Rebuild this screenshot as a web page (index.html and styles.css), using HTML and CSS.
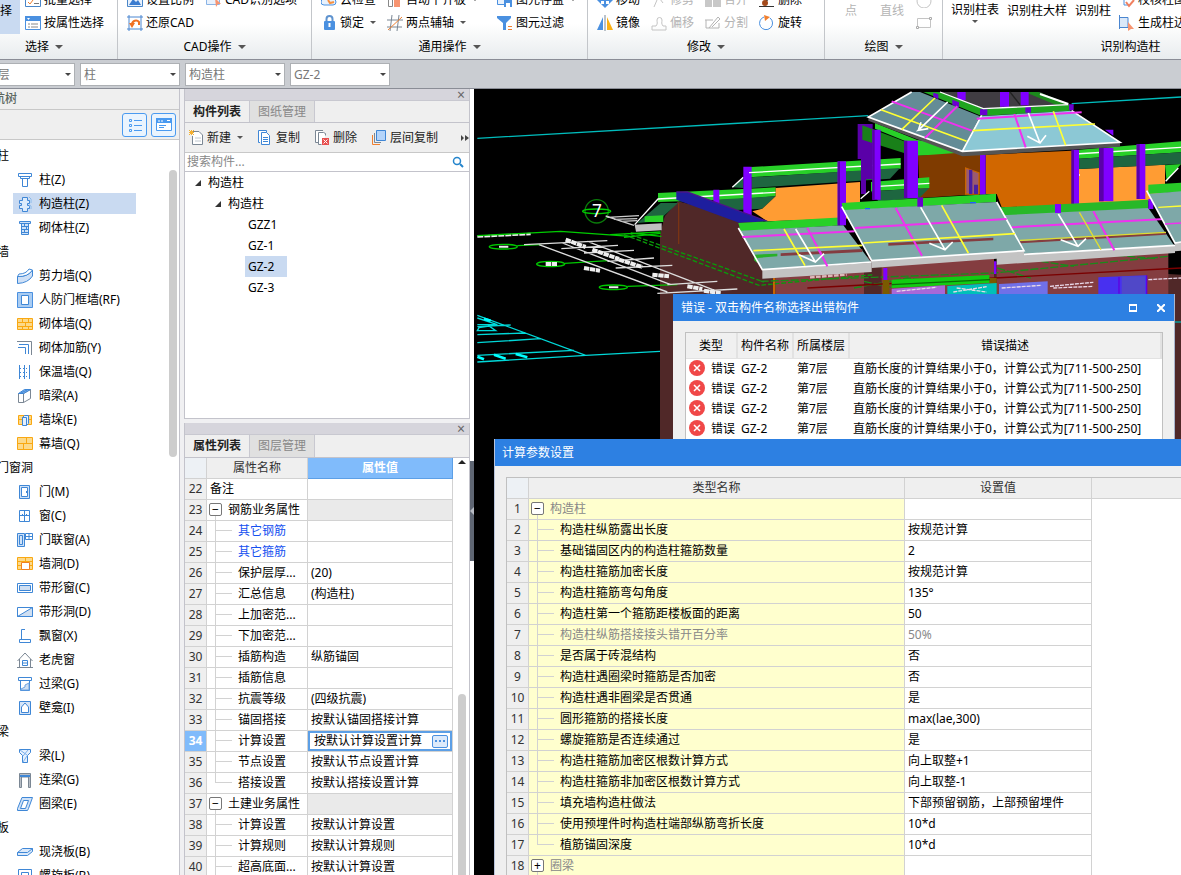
FILE: index.html
```
<!DOCTYPE html>
<html lang="zh-CN">
<head>
	<meta charset="UTF-8">
	<title>构造柱计算设置</title>
	<link rel="stylesheet" href="styles.css">
</head>
<body>
	<!-- 功能区 -->
	<header class="ribbon">
		<section class="group g-select">
			<div class="tools">
				<button class="big active">选择</button>
				<div class="cols">
					<button><svg class="ic" viewBox="0 0 16 16"><path d="M.5.5h15v14H.5z" fill="#fff" stroke="#4a86c8"/><path d="M3 10l2 2 3-4" fill="none" stroke="#f08030"/><path d="M9 11.5h5" stroke="#777"/></svg>批量选择</button>
					<button><svg class="ic" viewBox="0 0 16 16"><path d="M.5 1.500h15v13H.5z" fill="#fff" stroke="#4a90e0"/><path d="M0 1h16v5H0z" fill="#4a90e0"/><path d="M2 3h3l-1.500 2z" fill="#fff"/><path d="M3 9h2M3 12h2M6 9h7M6 12h7" stroke="#888"/></svg>按属性选择</button>
				</div>
			</div>
			<h2>选择<i class="arrow"></i></h2>
		</section>
		<section class="group g-cad">
			<div class="tools">
				<button><svg class="ic" viewBox="0 0 16 16"><path d="M.5.5h15v14H.5z" fill="#e8f1fc" stroke="#4a86c8"/><path d="M2 13l4-6 3 3 2-2 3 5z" fill="#3a7cd0"/></svg>设置比例</button>
				<button><svg class="ic" viewBox="0 0 16 16"><path d="M.5 4.500h13v8H.5z" fill="#e8f1fc" stroke="#8ab4e6"/><path d="M9 6l6 6-3 0-2 3z" fill="#f79470"/></svg>CAD识别选项</button>
				<button><svg class="ic" viewBox="0 0 16 16"><path d="M2 0v16M14 0v16M0 2h16M0 14h16" stroke="#4a86d0" fill="none"/><path d="M5 9a4 4 0 0 1 7-2v3" fill="none" stroke="#f07020" stroke-width="2"/><path d="M2 8h6l-3 5z" fill="#f07020"/></svg>还原CAD</button>
			</div>
			<h2>CAD操作<i class="arrow"></i></h2>
		</section>
		<section class="group g-common">
			<div class="tools">
				<button><svg class="ic" viewBox="0 0 16 16"><path d="M3 13a3 3 0 0 1 0-6 5 5 0 0 1 9 0 3 3 0 0 1 0 6z" fill="#e8f1fc" stroke="#4a90e0"/><path d="M7 8l2 3 4-1" fill="none" stroke="#f79040" stroke-width="2"/></svg>云检查</button>
				<button><svg class="ic" viewBox="0 0 16 16"><path d="M1.500.5h4v14h-4z" fill="#fff" stroke="#888"/><path d="M7 3h6v12H7z" fill="#f79470"/></svg>自动平齐板<i class="arrow small"></i></button>
				<button><svg class="ic" viewBox="0 0 16 16"><path d="M.5.5h12v12H.5z" fill="#e8f1fc" stroke="#4a90e0"/><path d="M7 6h8v9H7z" fill="#4a90e0"/><path d="M9 11h4v4H9z" fill="#fff"/></svg>图元存盘<i class="arrow small"></i></button>
				<button><svg class="ic" viewBox="0 0 16 16"><path d="M5.500 8V4a3 3 0 0 1 6 0v4" fill="none" stroke="#5f93cf" stroke-width="2"/><rect x="3" y="6" width="11" height="9" rx="1" fill="#4a90e0"/><path d="M8.500 8v4" stroke="#fff" stroke-width="2"/></svg>锁定<i class="arrow small"></i></button>
				<button><svg class="ic" viewBox="0 0 16 16"><path d="M5 0L3 16M12 0l-2 16M0 5h16M0 12h15" stroke="#7b8794" fill="none"/><path d="M1 15L15 2" stroke="#f08030"/></svg>两点辅轴<i class="arrow small"></i></button>
				<button><svg class="ic" viewBox="0 0 16 16"><path d="M0 1h14v2L9 8v7H6V8L0 3z" fill="#4a90e0"/><path d="M11 11.500h4M11 14.500h4" stroke="#f08030"/></svg>图元过滤</button>
			</div>
			<h2>通用操作<i class="arrow"></i></h2>
		</section>
		<section class="group g-edit">
			<div class="tools">
				<button><svg class="ic" viewBox="0 0 16 16"><path d="M8 1v14M1 8h14" stroke="#4a90e0" stroke-width="2"/><path d="M4 12h8l-4 4zM0 8l4-4v8zM16 8l-4-4v8z" fill="#4a90e0"/></svg>移动</button>
				<button disabled><svg class="ic" viewBox="0 0 16 16"><path d="M3 15L9 1M6 3l6 8" stroke="#c4c4c4"/></svg>修剪</button>
				<button disabled><svg class="ic" viewBox="0 0 16 16"><path d="M0 7h7v8H0zM8 7h8v8H8z" fill="#c8c8c8"/></svg>合并</button>
				<button><svg class="ic" viewBox="0 0 16 16"><path d="M0 14.500h15" stroke="#333"/><path d="M13 2L7 9" stroke="#444" stroke-width="2"/><circle cx="6" cy="11" r="3" fill="#a34a1c"/></svg>删除</button>
				<button><svg class="ic" viewBox="0 0 16 16"><path d="M6 2v13H0z" fill="#4a90e0"/><path d="M10 2l6 13h-6z" fill="#fbb014"/><path d="M8 0v16" stroke="#7b8794"/></svg>镜像</button>
				<button disabled><svg class="ic" viewBox="0 0 16 16"><path d="M1 11h4c2-3 1-3 1-6a2.500 2.500 0 0 1 5 0c0 3-1 3 1 6h3v4H1z" fill="none" stroke="#c4c4c4"/></svg>偏移</button>
				<button disabled><svg class="ic" viewBox="0 0 16 16"><path d="M0 5h8M1 5v8h13V8M4 13l9-11 2 2-8 8" fill="none" stroke="#b4b4b4"/></svg>分割</button>
				<button><svg class="ic" viewBox="0 0 16 16"><path d="M11 3a6.500 6.500 0 1 1-6-1" fill="none" stroke="#4a90e0"/><path d="M5 0l6 2-5 4z" fill="#f08030"/></svg>旋转</button>
			</div>
			<h2>修改<i class="arrow"></i></h2>
		</section>
		<section class="group g-draw">
			<div class="tools">
				<button disabled>点</button>
				<button disabled>直线</button>
				<div class="cols">
					<button disabled aria-label="圆"><svg class="ic" viewBox="0 0 16 16"><circle cx="8" cy="9" r="7" fill="none" stroke="#c4c4c4"/></svg></button>
					<button disabled aria-label="矩形"><svg class="ic" viewBox="0 0 16 16"><path d="M1.500 3.500h13v9h-13z" fill="none" stroke="#c4c4c4"/><path d="M13.500 2.500h2v2h-2zM.5 11.500h2v2h-2z" fill="#fff" stroke="#aaa"/></svg></button>
				</div>
			</div>
			<h2>绘图<i class="arrow"></i></h2>
		</section>
		<section class="group g-detect">
			<div class="tools">
				<button class="drop">识别柱表<i class="arrow small"></i></button>
				<button>识别柱大样</button>
				<button>识别柱</button>
				<div class="cols">
					<button><svg class="ic" viewBox="0 0 16 16"><path d="M5 1v12h5" fill="none" stroke="#4a90e0"/><path d="M7 10l3 4 5-6" fill="none" stroke="#f08060" stroke-width="2"/></svg>校核柱图元</button>
					<button><svg class="ic" viewBox="0 0 16 16"><path d="M.5 0v14M0 2.500h9v10H0" fill="#dbe8f8" stroke="#4a86d0"/><path d="M9 7l6 7-3 0-3 2z" fill="#f79470"/></svg>生成柱边线</button>
				</div>
			</div>
			<h2>识别构造柱</h2>
		</section>
	</header>

	<form class="filters">
		<label><select aria-label="楼层"><option>第7层</option></select></label>
		<label><select aria-label="构件大类"><option>柱</option></select></label>
		<label><select aria-label="构件类型"><option>构造柱</option></select></label>
		<label><select aria-label="构件名称"><option>GZ-2</option></select></label>
	</form>

	<main>
		<!-- 导航树 -->
		<nav class="nav">
			<h2><span>导航树</span></h2>
			<div class="nav-tools">
				<button aria-label="列表"><svg class="ic" viewBox="0 0 16 16" fill="none" stroke="#4a9af0"><path d="M2.500 2.500h2v2h-2zM2.500 7.500h2v2h-2zM2.500 12.500h2v2h-2zM7 3.500h8M7 8.500h8M7 13.500h8"/></svg></button>
				<button aria-label="面板"><svg class="ic" viewBox="0 0 16 16"><path d="M.5 1.500h15v12H.5z" fill="#fff" stroke="#4a9af0"/><path d="M0 1h16v5H0z" fill="#4a9af0"/><path d="M3 3v2M6 3v2M11 3.500h3" stroke="#fff"/><path d="M3 8.500h7M3 10.500h5" stroke="#4a9af0"/></svg></button>
			</div>
			<div class="nav-body">
				<div class="nav-list">
					<h3>柱</h3>
					<a href="#"><svg class="ic" viewBox="0 0 16 16" fill="#fff" stroke="#3f87d6"><path d="M1.500 1.500h13v3h-13zM3.500 4.500h9v2h-9zM5.500 6.500h5v8h-5z"/></svg>柱(Z)</a>
					<a href="#" class="active"><svg class="ic" viewBox="0 0 16 16" fill="#dcebfb" stroke="#3f87d6"><path d="M5.500 1.500h5v3h2v3h-2v2h2v3h-2v3h-5v-3h-3v-3h2v-2h-2v-3h3z"/><path d="M12 1l2 2v4M12 9l2 1v3" stroke="#8ab8ea"/></svg>构造柱(Z)</a>
					<a href="#"><svg class="ic" viewBox="0 0 16 16" fill="#cfe2f8" stroke="#3f87d6"><path d="M2.500 1.500h11v2h-11zM4.500 3.500h7v11h-7zM5 6.500h6M5 9.500h6M5 12.500h6M7.500 4v3M9.500 7v3M7.500 10v3"/></svg>砌体柱(Z)</a>
					<h3>墙</h3>
					<a href="#"><svg class="ic" viewBox="0 0 16 16" fill="#cfe0f6" stroke="#3f87d6"><path d="M.5 8.500Q11 9 15.500 2v6Q11 15 .5 15.500z"/><path d="M.5 8.500L2 6q7 0 10-5l3.500 1Q11 9 .5 8.500z" fill="#fff"/></svg>剪力墙(Q)</a>
					<a href="#"><svg class="ic" viewBox="0 0 16 16"><path d="M.5.5h15v15H.5z" fill="#a9ccf2" stroke="#4a90e0"/><path d="M4.500 3.500h7v9h-7z" fill="#fff" stroke="#3f87d6"/></svg>人防门框墙(RF)</a>
					<a href="#"><svg class="ic" viewBox="0 0 16 16" fill="#fcd98a" stroke="#f9a812"><path d="M.5 2.500h15v11H.5zM0 6.500h16M0 10.500h16M5.500 3v4M11.500 3v4M8.500 7v4M5.500 10v4M11.500 10v4"/></svg>砌体墙(Q)</a>
					<a href="#"><svg class="ic" viewBox="0 0 16 16" fill="none"><path d="M0 1.500h14.500V15" stroke="#7b8794"/><path d="M2 4.500h9.500V14M1 7.500h7.500V14" stroke="#3f87d6"/></svg>砌体加筋(Y)</a>
					<a href="#"><svg class="ic" viewBox="0 0 16 16" fill="none" stroke="#3f87d6"><path d="M2.500 1v14M7.500 1v14M12.500 1v14"/><path d="M3 4.500h12M3 8.500h12M3 12.500h12" stroke-dasharray="1 2"/></svg>保温墙(Q)</a>
					<a href="#"><svg class="ic" viewBox="0 0 16 16" fill="#fff" stroke="#7b8794"><path d="M1.500 5.500h5v9h-5zM6.500 5.500l7-4v9l-7 4z"/><path d="M1.500 5.500l6-4h6l-7 4zM4 5l6-3" fill="#7db2ee" stroke="#3f87d6"/></svg>暗梁(A)</a>
					<a href="#"><svg class="ic" viewBox="0 0 16 16"><path d="M1.500 3.500h13v9h-13zM1 7.500h14" fill="#fcd98a" stroke="#f9a812"/><path d="M5.500 5.500h4v8h-4zM5.500 5.500l2-2h4v8l-2 2" fill="#e5f0fd" stroke="#3f87d6"/></svg>墙垛(E)</a>
					<a href="#"><svg class="ic" viewBox="0 0 16 16" fill="#fcd98a" stroke="#f9a812"><path d="M.5 1.500h15v12H.5zM0 7.500h16M9.500 1v6M6.500 8v6"/></svg>幕墙(Q)</a>
					<h3>门窗洞</h3>
					<a href="#"><svg class="ic" viewBox="0 0 16 16" fill="#cfe2f8" stroke="#3f87d6"><path d="M2.500 1.500h10v13h-10z"/><path d="M4.500 3.500h6v9h-6z" fill="#fff"/><path d="M9.500 7v2"/></svg>门(M)</a>
					<a href="#"><svg class="ic" viewBox="0 0 16 16" fill="#fff" stroke="#3f87d6"><path d="M2.500 2.500h10v11h-10zM7.500 3v10M3 7.500h9M5.500 6v2M9.500 6v2"/></svg>窗(C)</a>
					<a href="#"><svg class="ic" viewBox="0 0 16 16" fill="#cfe2f8" stroke="#3f87d6"><path d="M.5 1.500h7v13h-7zM2.500 3.500h3v9h-3z"/><path d="M8.500 1.500h7v6h-7zM12 2v5M8 4.500h7" fill="#fff"/></svg>门联窗(A)</a>
					<a href="#"><svg class="ic" viewBox="0 0 16 16" fill="#fcd98a" stroke="#f9a812"><path d="M.5 1.500h15v12H.5zM0 5.500h16M0 9.500h16M8.500 1v4"/><path d="M4.500 6.500h8v7h-8z" fill="#fff" stroke="#f08020"/></svg>墙洞(D)</a>
					<a href="#"><svg class="ic" viewBox="0 0 16 16" stroke="#3f87d6"><path d="M.5 3.500h15v9H.5z" fill="#fff"/><path d="M2.500 5.500h11v5h-11z" fill="#cfdff2"/></svg>带形窗(C)</a>
					<a href="#"><svg class="ic" viewBox="0 0 16 16" stroke="#3f87d6"><path d="M.5 3.500h15v9H.5z" fill="#fff"/><path d="M.5 12.500l15-9v9z" fill="#cfdff2"/></svg>带形洞(D)</a>
					<a href="#"><svg class="ic" viewBox="0 0 16 16" fill="#fff" stroke="#3f87d6"><path d="M8 1.500H4.500v10M2.500 11.500h11v3h-11z"/></svg>飘窗(X)</a>
					<a href="#"><svg class="ic" viewBox="0 0 16 16" fill="none"><path d="M.5 9L8 1l7.500 8M2.500 7v8M13.500 7v8M0 15.500h16" stroke="#7b8794"/><path d="M5.500 8.500h5v5h-5zM5 11h6" fill="#fff" stroke="#3f87d6"/></svg>老虎窗</a>
					<a href="#"><svg class="ic" viewBox="0 0 16 16" stroke="#3f87d6"><path d="M1.500 1.500h13v3h-13zM3.500 4.500h9v10h-9z" fill="#fff"/><path d="M4 13l4-2 0-2 4-2v7H4z" fill="#cfdff2" stroke="#6aa2e2"/></svg>过梁(G)</a>
					<a href="#"><svg class="ic" viewBox="0 0 16 16" stroke="#3f87d6"><path d="M2.500 1.500h11v13h-11z" fill="#d6e5f8"/><path d="M4.500 12.500V7l3.500-4 3.500 4v5.500z" fill="#fff"/></svg>壁龛(I)</a>
					<h3>梁</h3>
					<a href="#"><svg class="ic" viewBox="0 0 16 16" fill="#e5f0fd" stroke="#3f87d6"><path d="M2.500 1.500h11v3l-3 3v7h-5v-7l-3-3z"/><path d="M3 2l7 5M6 14l4-6M11 2l-5 6" stroke="#7db2ee"/></svg>梁(L)</a>
					<a href="#"><svg class="ic" viewBox="0 0 16 16"><path d="M2.500 1.500h11v14h-2V5h-7v10.500h-2z" fill="#b8bec6" stroke="#7b8794"/><path d="M3 3h10v2H3z" fill="#3f87d6"/></svg>连梁(G)</a>
					<a href="#"><svg class="ic" viewBox="0 0 16 16" fill="#cfe2f8" stroke="#3f87d6"><path d="M5 1.500h10.500l-4 11-1 2H.5v-2z"/><path d="M6.500 4.500h5l-3 8h-5z" fill="#fff"/></svg>圈梁(E)</a>
					<h3>板</h3>
					<a href="#"><svg class="ic" viewBox="0 0 16 16" fill="#dbe9fa" stroke="#3f87d6"><path d="M.5 8.500l5-4h10v3l-5 4H.5z"/><path d="M.5 8.500h10l5-4" fill="none"/></svg>现浇板(B)</a>
					<a href="#"><svg class="ic" viewBox="0 0 16 16" fill="none" stroke="#3f87d6"><path d="M1.500 1.500h13v13h-13zM4.500 12V4.500h7v7h-4v-4h2"/></svg>螺旋板(B)</a>
				</div>
				<div class="nav-scroll"></div>
			</div>
		</nav>

		<div class="middle">
			<section class="panel list-panel">
				<div class="panel-bar"><button aria-label="关闭">×</button></div>
				<div class="tabs"><button class="active">构件列表</button><button>图纸管理</button></div>
				<div class="list-tools">
					<button><svg class="ic" viewBox="0 0 16 16"><path d="M4 1.500h6l3.500 3.500v9.500h-10V6" fill="#fff" stroke="#7b8794"/><path d="M6 8h6M6 11h6" stroke="#c0c8d0"/><path d="M0 0l5 5M5 0L0 5M2.500 0v5M0 2.500h5" stroke="#f5b030"/></svg>新建<i class="arrow small"></i></button>
					<button><svg class="ic" viewBox="0 0 16 16" fill="#fff" stroke="#3f87d6"><path d="M8.500 3V.5h-8v12H2"/><path d="M3.500 2.500h5l3 3v9h-8zM5 7.500h5M5 9.500h5M5 11.500h5"/></svg>复制</button>
					<button><svg class="ic" viewBox="0 0 16 16"><path d="M8 .5H.5v12H3M10.500 5.500V3.500l-2-1h-5v12h3" fill="#fff" stroke="#7b8794"/><path d="M7 8h7v7H7z" fill="#e85050"/><path d="M8.500 9.500l4 4M12.500 9.500l-4 4" stroke="#fff"/></svg>删除</button>
					<button><svg class="ic" viewBox="0 0 16 16"><path d="M.5 5v9.500H8" fill="none" stroke="#f08030"/><path d="M2.500 3v9.500H9" fill="none" stroke="#7b8794"/><path d="M4.500.5h9v10h-9z" fill="#b4d4fa" stroke="#3f87d6"/></svg>层间复制</button>
					<button class="more" aria-label="更多"><svg viewBox="0 0 8 8"><path d="M0 1l3 3-3 3zM4 1l4 3-4 3z" fill="#444"/></svg></button>
				</div>
				<label class="search">
					<input type="text" placeholder="搜索构件..." aria-label="搜索构件">
					<svg viewBox="0 0 12 12"><circle cx="5" cy="5" r="3.500" fill="none" stroke="#2585cc" stroke-width="1.500"/><path d="M8 8l3 3" stroke="#2585cc" stroke-width="2"/></svg>
				</label>
				<ul class="tree">
					<li><span><svg viewBox="0 0 8 8"><path d="M7 1v6H1z"/></svg>构造柱</span>
						<ul>
							<li><span><svg viewBox="0 0 8 8"><path d="M7 1v6H1z"/></svg>构造柱</span>
								<ul class="leaf">
									<li><a href="#">GZZ1</a></li>
									<li><a href="#">GZ-1</a></li>
									<li><a href="#" class="active">GZ-2</a></li>
									<li><a href="#">GZ-3</a></li>
								</ul>
							</li>
						</ul>
					</li>
				</ul>
			</section>

			<section class="panel prop-panel">
				<div class="panel-bar"><button aria-label="关闭">×</button></div>
				<div class="tabs"><button class="active">属性列表</button><button>图层管理</button></div>
				<div class="prop-body">
					<table class="grid props">
						<colgroup><col class="c-no"><col class="c-name"><col></colgroup>
						<thead><tr><th class="corner"></th><th>属性名称</th><th class="current">属性值</th></tr></thead>
						<tbody>
							<tr><th>22</th><td>备注</td><td></td></tr>
							<tr class="head"><th>23</th><td><button class="toggle">−</button>钢筋业务属性</td><td></td></tr>
							<tr class="sub link"><th>24</th><td>其它钢筋</td><td></td></tr>
							<tr class="sub link"><th>25</th><td>其它箍筋</td><td></td></tr>
							<tr class="sub"><th>26</th><td>保护层厚...</td><td>(20)</td></tr>
							<tr class="sub"><th>27</th><td>汇总信息</td><td>(构造柱)</td></tr>
							<tr class="sub"><th>28</th><td>上加密范...</td><td></td></tr>
							<tr class="sub"><th>29</th><td>下加密范...</td><td></td></tr>
							<tr class="sub"><th>30</th><td>插筋构造</td><td>纵筋锚固</td></tr>
							<tr class="sub"><th>31</th><td>插筋信息</td><td></td></tr>
							<tr class="sub"><th>32</th><td>抗震等级</td><td>(四级抗震)</td></tr>
							<tr class="sub"><th>33</th><td>锚固搭接</td><td>按默认锚固搭接计算</td></tr>
							<tr class="sub editing"><th>34</th><td>计算设置</td><td><div class="editor"><input type="text" value="按默认计算设置计算" aria-label="计算设置"><button aria-label="计算设置详情"><svg viewBox="0 0 10 2"><path d="M0 0h2v2H0zM4 0h2v2H4zM8 0h2v2H8z" fill="#4a90e0"/></svg></button></div></td></tr>
							<tr class="sub"><th>35</th><td>节点设置</td><td>按默认节点设置计算</td></tr>
							<tr class="sub last"><th>36</th><td>搭接设置</td><td>按默认搭接设置计算</td></tr>
							<tr class="head"><th>37</th><td><button class="toggle">−</button>土建业务属性</td><td></td></tr>
							<tr class="sub"><th>38</th><td>计算设置</td><td>按默认计算设置</td></tr>
							<tr class="sub"><th>39</th><td>计算规则</td><td>按默认计算规则</td></tr>
							<tr class="sub"><th>40</th><td>超高底面...</td><td>按默认计算设置</td></tr>
						</tbody>
					</table>
					<div class="prop-scroll"><i class="up"></i><i class="thumb"></i></div>
				</div>
			</section>
		</div>
		<div class="splitter"><button aria-label="收起"><svg viewBox="0 0 4 8"><path d="M4 0v8L0 4z" fill="#b8bcc4"/></svg></button></div>

		<div class="view">
			<!-- 三维模型 -->
			<svg class="model" viewBox="0 3 2121 2358" preserveAspectRatio="xMinYMin slice" fill="none" stroke-width="4">
				<path d="M10 151L1183 83M1793 47L2121 27" stroke="#00bcbc"/>
				<path d="M10 682L335 802L600 788M10 690l60 20H10M10 716l100-5M10 740l145-5M10 764l190-12M10 802l290-15M10 822l325-20M10 728h55l-20-14-30 5z" stroke="#00d8d8"/>
				<path d="M60 800l35 12M125 798l35 10M10 806l20 8M30 692l20 6" stroke="#0ff" stroke-width="8"/>
				<!-- 墙体 -->
				<path d="M558 1060V440L572 385L612 340L870 405L1080 500L2121 560V1060z" fill="#502828"/>
				<path d="M614 345V468" stroke="#7a3414"/>
				<path d="M905 570L1170 545V620H905zM1223 530L1560 512V620H1223zM1568 520L2083 492V620H1568z" fill="#843d40"/>
				<path d="M897 570h7v50h-7z" fill="#c86400"/>
				<!-- 轴线与标注 -->
				<circle cx="368" cy="370" r="35" stroke="#0a7a0a"/>
				<ellipse cx="368" cy="370" rx="42" ry="7" stroke="#0c0"/>
				<text class="axis" x="354" y="388">7</text>
				<path d="M395 384L480 412M400 388l95-5M420 394l70-2M440 400l50-2" stroke="#ccc"/>
				<path d="M10 446L170 438" stroke="#eee" stroke-width="7" stroke-dasharray="18 3"/>
				<path d="M10 443L260 430L470 445M410 440l150-8M450 448l110-12M470 435l92 10" stroke="#0c0"/>
				<g stroke="#00c800"><ellipse cx="88" cy="476" rx="42" ry="7"/><ellipse cx="230" cy="528" rx="42" ry="8"/><ellipse cx="418" cy="598" rx="42" ry="7"/><path d="M130 473l70-3M272 526l130-8M460 595l150-5"/></g>
				<path d="M150 470L400 458M195 470L580 612M265 465L590 590M340 460L730 610M262 482l170-10M330 495l150-8M400 520l140-10M425 540l170-8M580 590l150-10M550 616l240-13" stroke="#ddd"/>
				<path d="M275 455l60 22M355 485l80 28M435 515l70 22M330 540l48 8M535 560l50 5M640 595l45 8M690 608l50 8M215 528h34" stroke="#eee" stroke-width="12" stroke-dasharray="16 2"/>
				<path d="M75 476h28M405 598h28" stroke="#eee" stroke-width="6"/>
				<path d="M450 440L855 592L1200 560M470 440L870 582" stroke="#0a9a0a" stroke-dasharray="14 6"/>
				<path d="M860 580L1200 568L1560 555L2083 505M1140 600l160-30 80 10M1170 580L1260 600M1570 540l100 30M1700 520l100 15M1900 500l150 12" stroke="#1a8a1a" stroke-dasharray="24 6"/>
				<path d="M1000 600L2121 540" stroke="#7a0000"/>
				<path d="M1008 568l110-8" stroke="#ddb8b8" stroke-width="7" stroke-dasharray="14 4"/>
				<!-- 左侧屋面 -->
				<path d="M612 345L552 400L490 405L560 345z" fill="#1e6640"/>
				<path d="M552 315L905 298V325L760 335L552 342z" fill="#28d028"/>
				<path d="M720 335L905 325L865 362L740 368z" fill="#1e6640"/>
				<path d="M512 385L568 382V402H512z" fill="#28d028"/>
				<path d="M482 410L563 406V427L486 431z" fill="#c0c0c0"/>
				<path d="M482 410L552 333L905 313" stroke="#fff"/>
				<path d="M775 298L808 268V300z" fill="#1e6640"/>
				<path d="M775 298L808 268" stroke="#fff"/>
				<path d="M820 238L1280 210V242L820 268z" fill="#28d028"/>
				<path d="M832 268L1278 240L1248 272L832 300z" fill="#1e6640"/>
				<path d="M905 300L1158 282V390L880 400L835 370L865 362L905 325z" fill="#ff9c33"/>
				<path d="M718 305h18v40h-18zM808 236h25v145h-25z" fill="#8000ff"/>
				<path d="M825 254L1280 228" stroke="#fff"/>
				<path d="M607 312L640 312L880 400L795 404L607 335z" fill="#1e1e9e"/>
				<path d="M607 312L640 312L880 400" stroke="#4a148c"/>
				<path d="M793 405L1110 388V412L800 430z" fill="#28d028"/>
				<path d="M797 428L1108 412L1193 525L865 545z" fill="#7ea8a8"/>
				<path d="M920 496L1165 483V492L920 504z" fill="#843d40"/>
				<path d="M840 500l70-3v8l-60 5v15l-10-8z" fill="#28b028"/>
				<path d="M865 545L1193 524V552L865 572z" fill="#c3c3c3"/>
				<path d="M793 420L865 545L1193 522" stroke="#fff" stroke-width="5"/>
				<path d="M805 447L1142 430M1000 420L1060 535M1038 490L1060 535" stroke="#f030f0" stroke-width="6"/>
				<path d="M838 488L1165 472M930 423L993 533" stroke="#ff3" stroke-width="5"/>
				<path d="M965 423L1024 522M975 500L1024 522L1050 497" stroke="#fff" stroke-width="5"/>
				<g transform="translate(1038 0)">
					<!-- 塔楼 -->
					<path d="M113 108h45v165h-20v45h-15v-105h-10z" fill="#5a00a8"/>
					<path d="M127 112L252 160V195L127 155z" fill="#198019"/>
					<path d="M165 105L290 155L370 170L425 200L294 203V175L165 122z" fill="#28d028"/>
					<path d="M294 203L480 190V318L300 330z" fill="#7f3b00"/>
					<path d="M497 200L755 188V352L545 358L530 318H497z" fill="#d16700"/>
					<path d="M437 240l40 15v63h-40z" fill="#9a5a70" stroke="#c86400"/>
					<path d="M447 245h10v73h-10zM462 290h12v28h-12z" fill="#4a20a0"/>
					<path d="M777 243L1035 230V335L777 348z" fill="#ff9c33"/>
					<path d="M777 185L1083 160V193L777 212z" fill="#28d028"/>
					<path d="M777 212L1083 193V228L777 243z" fill="#1e6640"/>
					<path d="M1035 232L1083 228L1040 280z" fill="#28d028"/>
					<path d="M765 198L1083 178M765 261h15M1037 280L1075 240" stroke="#fff"/>
					<path d="M153 282L328 268V300L153 310z" fill="#28d028"/>
					<path d="M153 310L328 300L298 330L175 340z" fill="#1e6640"/>
					<path d="M162 296L328 286M122 332L148 310" stroke="#fff"/>
					<path d="M157 125h25v210h-25zM252 158h42v172h-42zM480 200h17v120h-17zM755 185h22v165h-22zM837 180h43v160h-43zM950 168h26v165h-26zM53 220h25v192H53zM855 125h25v18z" fill="#8000ff"/>
					<path d="M157 125h7v210h-7zM252 158h10v172h-10zM755 185h7v165h-7zM837 180h14v160h-14zM950 168h9v165h-9zM53 220h7v192H53z" fill="#5a00a8"/>
					<path d="M355 12H660L740 50L490 62z" fill="#403d42"/>
					<path d="M615 12H655L745 47L710 52z" fill="#1b8a1b"/>
					<path d="M570 12L600 50" stroke="#222"/>
					<path d="M660 18L745 48" stroke="#fff" stroke-width="6"/>
					<path d="M412 12h25v24h-25zM540 12h27v44h-27zM602 12h24v40h-24z" fill="#8000ff"/>
					<path d="M310 12H360L490 62L750 50V68L485 84z" fill="#1fa51f"/>
					<path d="M340 14l15 5v15l-15-8zM397 35l20 8v16l-20-8zM480 64h22v18h-22zM616 57h17v17h-17zM747 49h14v18h-14z" fill="#6a00d0"/>
					<path d="M360 12L490 62L745 50" stroke="#fff"/>
					<path d="M145 87L427 190L900 163V176L427 205L145 98z" fill="#555"/>
					<path d="M275 12H300L480 85L427 190L145 87z" fill="#648c96"/>
					<path d="M480 85L755 68L900 163L427 190z" fill="#8cc8d5"/>
					<path d="M275 12L145 87L427 190L900 163L755 68M427 190L485 82" stroke="#fff" stroke-width="5"/>
					<path d="M215 40L455 128M412 55L315 150M470 92L785 73M583 78L617 178" stroke="#f030f0" stroke-width="6"/>
					<path d="M345 30L245 125M183 65L440 160M458 128L825 108M700 70L737 172" stroke="#ff3" stroke-width="5"/>
					<path d="M383 42L295 127L325 122M295 127L303 103M625 75L660 165M622 145L660 165L678 142" stroke="#fff" stroke-width="5"/>
					<!-- 下层屋面 -->
					<path d="M540 358L985 335V362L545 385z" fill="#28b828"/>
					<path d="M545 382L985 360L1062 472L612 497z" fill="#7ea8a8"/>
					<path d="M598 460L1038 433V440L602 466z" fill="#843d40"/>
					<path d="M530 502L1065 472V495L530 530z" fill="#c3c3c3"/>
					<path d="M612 499L1065 472" stroke="#fff" stroke-width="5"/>
					<path d="M705 348h18v27h-18zM985 333h15v30h-15z" fill="#8000ff"/>
					<path d="M575 418L1035 393M820 370L883 487" stroke="#f030f0" stroke-width="6"/>
					<path d="M600 457L1038 433M778 373L843 485" stroke="#dd3" stroke-width="4"/>
					<path d="M715 378L774 475M722 455L774 475L798 452" stroke="#fff" stroke-width="5"/>
					<path d="M65 345L528 317V342L70 368z" fill="#28d028"/>
					<path d="M70 366L528 342L612 490L155 518z" fill="#7ea8a8"/>
					<path d="M205 465L520 449V457L205 473z" fill="#843d40"/>
					<path d="M155 518L612 488V502L530 512L155 540z" fill="#c3c3c3"/>
					<path d="M65 356L155 518L612 488L530 342" stroke="#fff" stroke-width="5"/>
					<path d="M292 328h17v28h-17z" fill="#6a00d0"/>
					<path d="M105 420L560 393M227 360L306 503" stroke="#f030f0" stroke-width="6"/>
					<path d="M130 465L585 437M365 352L445 495" stroke="#ff3" stroke-width="5"/>
					<path d="M302 358L375 485M328 466L375 485L398 462" stroke="#fff" stroke-width="5"/>
					<path d="M135 362h15M450 344h18" stroke="#2060ff"/>
					<path d="M985 290L1083 284V312L985 318z" fill="#28c828"/>
					<path d="M985 318L1083 310V462L1065 465z" fill="#7ea8a8"/>
					<path d="M1065 465L1083 462V488L1065 490z" fill="#c3c3c3"/>
					<path d="M980 308L1065 465L1083 462" stroke="#fff" stroke-width="5"/>
					<path d="M1015 358L1083 354" stroke="#ff3"/>
					<path d="M1035 408L1083 405" stroke="#f030f0"/>
					<!-- 门窗 -->
					<path d="M190 540h12v38h-12zM522 520h7v38h-7z" fill="#8000ff"/>
					<path d="M188 576h20v44h-20zM508 570h22v50h-22z" fill="#7a5a00"/>
					<path d="M215 575L508 561V585L215 600z" fill="#1c1"/>
					<path d="M215 602L375 592V620H215z" fill="#a868d8"/>
					<path d="M382 594L530 585V620H382z" fill="#00c0b8"/>
					<path d="M537 588L683 580V620H537z" fill="#7070e8"/>
					<path d="M835 568L978 562V620H835z" fill="#4830f0"/>
					<path d="M905 565h70v55h-70z" fill="#5048c8"/>
					<path d="M230 610l120-12M400 612l100-16M410 600l90 12M545 600l120-8M690 595l130-12M700 600l120-5M985 575l98-5" stroke="#e8d8e8" stroke-dasharray="12 3"/>
					<path d="M215 590L510 575" stroke="#0a6a0a"/>
					<path d="M897 567v50M980 562v58" stroke="#6000e0"/>
				</g>
				<path d="M2100 702h21" stroke="#0aa"/>
			</svg>

			<!-- 错误窗口 -->
			<section class="dialog errors">
				<header>错误 - 双击构件名称选择出错构件
					<span>
						<button aria-label="最大化"><svg viewBox="0 0 8 8"><path d="M0 1h8v6H0z" fill="none" stroke="#fff" stroke-width="2"/></svg></button>
						<button aria-label="关闭"><svg viewBox="0 0 8 8"><path d="M0 0l8 8M8 0L0 8" stroke="#fff" stroke-width="2"/></svg></button>
					</span>
				</header>
				<div class="dialog-body">
					<table class="error-table">
						<colgroup><col class="c-kind"><col class="c-mid"><col class="c-mid"><col></colgroup>
						<thead><tr><th>类型</th><th>构件名称</th><th>所属楼层</th><th>错误描述</th></tr></thead>
						<tbody>
							<tr><td><svg class="ic" viewBox="0 0 16 16"><circle cx="8" cy="8" r="8" fill="#f04848"/><path d="M5 5l6 6M11 5l-6 6" stroke="#fff" stroke-width="1.500"/></svg>错误</td><td>GZ-2</td><td>第7层</td><td>直筋长度的计算结果小于0，计算公式为[711-500-250]</td></tr>
							<tr><td><svg class="ic" viewBox="0 0 16 16"><circle cx="8" cy="8" r="8" fill="#f04848"/><path d="M5 5l6 6M11 5l-6 6" stroke="#fff" stroke-width="1.500"/></svg>错误</td><td>GZ-2</td><td>第7层</td><td>直筋长度的计算结果小于0，计算公式为[711-500-250]</td></tr>
							<tr><td><svg class="ic" viewBox="0 0 16 16"><circle cx="8" cy="8" r="8" fill="#f04848"/><path d="M5 5l6 6M11 5l-6 6" stroke="#fff" stroke-width="1.500"/></svg>错误</td><td>GZ-2</td><td>第7层</td><td>直筋长度的计算结果小于0，计算公式为[711-500-250]</td></tr>
							<tr><td><svg class="ic" viewBox="0 0 16 16"><circle cx="8" cy="8" r="8" fill="#f04848"/><path d="M5 5l6 6M11 5l-6 6" stroke="#fff" stroke-width="1.500"/></svg>错误</td><td>GZ-2</td><td>第7层</td><td>直筋长度的计算结果小于0，计算公式为[711-500-250]</td></tr>
						</tbody>
					</table>
				</div>
			</section>

			<!-- 计算参数设置 -->
			<section class="dialog params">
				<header>计算参数设置</header>
				<div class="dialog-body">
					<table class="grid param-table">
						<colgroup><col class="c-no"><col class="c-type"><col class="c-value"><col></colgroup>
						<thead><tr><th class="corner"></th><th>类型名称</th><th>设置值</th><th></th></tr></thead>
						<tbody>
							<tr class="head"><th>1</th><td><button class="toggle">−</button>构造柱</td><td></td><td></td></tr>
							<tr class="sub"><th>2</th><td>构造柱纵筋露出长度</td><td>按规范计算</td><td></td></tr>
							<tr class="sub"><th>3</th><td>基础锚固区内的构造柱箍筋数量</td><td>2</td><td></td></tr>
							<tr class="sub"><th>4</th><td>构造柱箍筋加密长度</td><td>按规范计算</td><td></td></tr>
							<tr class="sub"><th>5</th><td>构造柱箍筋弯勾角度</td><td>135°</td><td></td></tr>
							<tr class="sub"><th>6</th><td>构造柱第一个箍筋距楼板面的距离</td><td>50</td><td></td></tr>
							<tr class="sub off"><th>7</th><td>构造柱纵筋搭接接头错开百分率</td><td>50%</td><td></td></tr>
							<tr class="sub"><th>8</th><td>是否属于砖混结构</td><td>否</td><td></td></tr>
							<tr class="sub"><th>9</th><td>构造柱遇圈梁时箍筋是否加密</td><td>否</td><td></td></tr>
							<tr class="sub"><th>10</th><td>构造柱遇非圈梁是否贯通</td><td>是</td><td></td></tr>
							<tr class="sub"><th>11</th><td>圆形箍筋的搭接长度</td><td>max(lae,300)</td><td></td></tr>
							<tr class="sub"><th>12</th><td>螺旋箍筋是否连续通过</td><td>是</td><td></td></tr>
							<tr class="sub"><th>13</th><td>构造柱箍筋加密区根数计算方式</td><td>向上取整+1</td><td></td></tr>
							<tr class="sub"><th>14</th><td>构造柱箍筋非加密区根数计算方式</td><td>向上取整-1</td><td></td></tr>
							<tr class="sub"><th>15</th><td>填充墙构造柱做法</td><td>下部预留钢筋，上部预留埋件</td><td></td></tr>
							<tr class="sub"><th>16</th><td>使用预埋件时构造柱端部纵筋弯折长度</td><td>10*d</td><td></td></tr>
							<tr class="sub last"><th>17</th><td>植筋锚固深度</td><td>10*d</td><td></td></tr>
							<tr class="head"><th>18</th><td><button class="toggle">+</button>圈梁</td><td></td><td></td></tr>
						</tbody>
					</table>
				</div>
			</section>
		</div>
	</main>
</body>
</html>
```

FILE: styles.css
```
*{box-sizing:border-box;}
body{margin:0;height:100vh;display:flex;flex-direction:column;overflow:hidden;font:12px/20px "Noto Sans","Noto Sans CJK SC",sans-serif;color:#000;background:#f0f0f2;}
button,input,select{font:inherit;color:inherit;}
button{display:flex;align-items:center;padding:0;border:0;background:none;white-space:nowrap;}
h2,h3{margin:0;font-size:12px;font-weight:normal;}
a{color:inherit;text-decoration:none;}
ul{margin:0;padding:0;list-style:none;}
svg{flex:none;}
.ic{width:16px;height:16px;}
.arrow{flex:none;border:4px solid transparent;border-top-color:#555;border-bottom:0;margin-left:6px;}
.arrow.small{border-width:3px 3px 0;}

/* 功能区 */
.ribbon{flex:none;display:flex;height:60px;overflow:hidden;background:linear-gradient(#fff 40%,#e8ecee);border-bottom:1px solid #8a8d96;}
.group{flex:none;display:flex;flex-direction:column;justify-content:flex-end;padding-bottom:2px;border-right:1px solid #c3c6ca;}
.group h2{display:flex;align-items:center;justify-content:center;height:20px;}
.tools{display:grid;grid-auto-rows:23px;margin-bottom:3px;align-items:center;}
.tools button{gap:3px;height:23px;}
.tools button:disabled{color:#b4b4b4;}
.tools .arrow.small{margin-left:3px;}
.cols{grid-row:span 2;}
.g-select{width:118px;padding-right:29px;}
.g-select .tools{display:flex;margin-right:-29px;}
.tools .big{width:20px;height:46px;justify-content:flex-end;padding:0 8px 0 0;margin-right:5px;background:#c9daf1;}
.g-cad{width:194px;}
.g-cad .tools{grid-template-columns:79px 1fr;padding-left:9px;}
.g-common{width:276px;}
.g-common .tools{grid-template-columns:66px 110px 1fr;padding-left:9px;}
.g-edit{width:237px;}
.g-edit .tools{grid-template-columns:54px 54px 54px 1fr;padding-left:9px;}
.g-draw{width:118px;}
.g-draw .tools,.g-detect .tools{display:flex;}
.g-draw .tools{padding-left:20px;}
.g-draw .tools > button{margin-right:23px;}
.g-draw .tools > button + button{margin-right:12px;}
.g-detect{flex:1 0 auto;padding-left:8px;border:0;}
.g-detect .tools{gap:8px;}
.tools .drop{flex-direction:column;align-self:flex-end;height:34px;gap:0;}
.tools .drop .arrow{margin:0;}
.g-detect h2{padding-left:112px;}

.filters{flex:none;display:flex;gap:5px;height:29px;padding:3px 0;overflow:hidden;background:#cacdd2;border-bottom:1px solid #8a8d96;}
.filters label{flex:none;display:flex;align-items:center;width:100px;height:23px;padding-right:3px;background:#fff;border:1px solid #adb0b4;}
.filters label:first-child{margin-left:-25px;}
.filters label::after{content:"";border:3px solid transparent;border-top-color:#444;border-bottom:0;}
.filters select{flex:1;min-width:0;height:21px;padding:0 3px;border:0;background:none;appearance:none;color:#777;}

main{flex:1;min-height:0;display:flex;}

/* 导航树 */
.nav{flex:none;display:flex;flex-direction:column;width:180px;background:#fff;border-right:1px solid #c3c3cb;overflow:hidden;}
.nav h2{flex:none;height:21px;background:#efefef;border-bottom:1px solid #c8c8c8;color:#5c665f;font-weight:500;}
.nav h2 span{margin-left:-19px;}
.nav-tools{flex:none;display:flex;justify-content:flex-end;align-items:center;gap:4px;height:30px;padding-right:3px;background:#efefef;border-bottom:1px solid #c8c8c8;}
.nav-tools button{width:25px;height:24px;justify-content:center;border:1px solid #4a9af0;border-radius:3px;background:#eaf4fe;}
.nav-body{flex:1;min-height:0;display:flex;padding-top:5px;}
.nav-list{flex:1;}
.nav-list h3{height:26px;line-height:26px;margin:-2px 0 0 -3px;}
.nav-list a{display:flex;align-items:center;gap:6px;width:123px;height:21px;margin:0 0 3px 13px;padding-left:4px;white-space:nowrap;}
.nav-list .active,.tree .active{background:#c9daf1;}
.nav-scroll{width:8px;height:287px;margin:25px 2px 0 0;border-radius:4px;background:#cdcdcd;}

/* 中间面板 */
.middle{flex:none;display:flex;flex-direction:column;gap:4px;width:286px;margin-left:4px;}
.panel{display:flex;flex-direction:column;background:#fff;border:1px solid #c3c3cb;border-top:0;}
.list-panel{flex:none;height:330px;}
.prop-panel{flex:1;min-height:0;border-bottom:0;overflow:hidden;}
.panel-bar{flex:none;display:flex;justify-content:flex-end;align-items:center;height:12px;padding-right:4px;background:#d6d5dc;border-bottom:1px solid #c8c8d0;}
.panel-bar button{height:11px;font-size:14px;line-height:10px;color:#666;}
.tabs{flex:none;display:flex;height:22px;background:#efefef;border-bottom:1px solid #c3c3cb;}
.prop-panel .tabs{height:23px;}
.tabs button{width:65px;justify-content:center;border-right:1px solid #c8c8d0;background:#e0e0e0;color:#888;}
.tabs .active{background:#efefef;color:#222;font-weight:bold;}
.list-tools{flex:none;display:flex;align-items:center;gap:15px;height:30px;padding-left:4px;background:#efefef;border-bottom:1px solid #c8c8c8;color:#222;}
.list-tools button{gap:2px;}
.list-tools .arrow{margin-left:4px;}
.list-tools .more{margin-left:auto;}
.more svg{width:8px;height:8px;}
.search{flex:none;display:flex;align-items:center;height:19px;padding:0 5px 0 2px;border-bottom:1px solid #c3c3cb;}
.search input{flex:1;min-width:0;height:18px;padding:0;border:0;outline:0;}
.search input::placeholder{color:#888;}
.search svg{width:12px;height:12px;}
.tree{line-height:21px;}
.tree ul{padding-left:20px;}
.tree span{display:flex;align-items:center;gap:6px;padding-left:9px;}
.tree span svg{width:8px;height:8px;fill:#333;}
.tree .leaf{padding-left:40px;}
.leaf a{display:block;width:42px;padding-left:3px;}

/* 表格 */
.grid{flex:1;width:0;border-collapse:separate;border-spacing:0;table-layout:fixed;}
.grid th,.grid td{height:21px;padding:0;line-height:20px;border:solid #d2d2d2;border-width:0 1px 1px 0;font-weight:normal;text-align:left;white-space:nowrap;overflow:hidden;}
.grid th{background:#efefef;color:#333;text-align:center;}
.grid td{padding-left:3px;}
.grid .corner{background:#edf1f5;}
.c-no{width:22px;}
.c-name{width:101px;}
.grid .head td:nth-child(2){padding-left:2px;background:linear-gradient(#d2d2d2,#d2d2d2) 8px 16px/1px 5px no-repeat;}
.grid .sub td:nth-child(2){padding-left:31px;background:linear-gradient(#d2d2d2,#d2d2d2) 8px 0/1px 21px no-repeat,linear-gradient(#d2d2d2,#d2d2d2) 8px 9px/17px 1px no-repeat;}
.grid .last td:nth-child(2){background-size:1px 10px,17px 1px;}
.toggle{display:inline-flex;justify-content:center;width:13px;height:13px;margin:-2px 6px 0 0;border:1px solid #777;border-radius:2px;background:#fff;color:#000;line-height:10px;vertical-align:middle;}
.prop-body{flex:1;min-height:0;display:flex;align-items:flex-start;}
.props .current{background:#80bbfb;color:#fff;font-weight:bold;border-color:#5c9fe6;}
.props .head td:last-child{background:#eaeaea;}
.props .link td{color:#1450f0;}
.props .editing th{background:#80bbfb;color:#fff;font-weight:bold;}
.props .editing td:last-child{padding:0;}
.editor{display:flex;align-items:center;height:20px;padding:0 2px 0 4px;border:2px solid #5c9fe6;}
.editor input{flex:1;min-width:0;height:16px;padding:0;border:0;outline:0;background:none;}
.editor button{width:16px;height:13px;justify-content:center;border:1px solid #4a90e0;border-radius:2px;background:#dceafb;}
.editor svg{width:10px;height:2px;}
.prop-scroll{align-self:stretch;display:flex;flex-direction:column;width:16px;padding:2px 3px 0 5px;}
.up{width:8px;border:4px solid transparent;border-bottom-color:#222;border-top:0;}
.thumb{flex:1;margin-top:230px;border-radius:4px 4px 0 0;background:#cdcdcd;}

.splitter{flex:none;width:4px;padding-top:372px;background:#fff;}
.splitter button{width:4px;height:100px;background:#5f6673;}
.splitter svg{width:4px;height:8px;}

/* 三维视图 */
.view{flex:1;position:relative;overflow:hidden;background:#000;}
.model{display:block;width:707px;height:786px;min-width:100%;}
.axis{font:52px "Noto Sans",sans-serif;fill:#fff;}

.dialog{position:absolute;background:#efefef;}
.dialog header{display:flex;justify-content:space-between;height:27px;line-height:27px;padding-left:8px;background:#2d80e2;color:#fff;}
.dialog header span{display:flex;gap:20px;padding-right:9px;}
.dialog header svg{width:8px;height:8px;}
.errors{left:199px;top:205px;width:502px;border-right:1px solid #a8b4cc;}
.errors .dialog-body{padding:11px 11px 0 12px;}
.error-table{width:100%;border:1px solid #c0c0c0;border-collapse:separate;border-spacing:0;table-layout:fixed;background:#fff;}
.error-table th{height:26px;padding:0;border:solid #e2e2e2;border-width:0 2px 1px 0;background:#f0f0f0;font-weight:normal;}
.error-table td{height:20px;padding:0 0 0 3px;line-height:20px;white-space:nowrap;}
.error-table .ic{margin-right:6px;vertical-align:-3px;}
.c-kind{width:52px;}
.c-mid{width:56px;}
.params{left:20px;right:0;top:350px;bottom:0;border-left:1px solid #b8c4dc;overflow:hidden;}
.params header{margin-left:-1px;}
.params .dialog-body{padding:11px 0 0 11px;}
.param-table{width:100%;border:solid #c0c0c0;border-width:1px 0 0 1px;background:#fff;}
.c-type{width:376px;}
.c-value{width:187px;}
.param-table th:last-child,.param-table td:last-child{border-right:0;}
.param-table td:last-child{border-bottom:0;}
.param-table td:nth-child(2){background-color:#ffffce !important;}
.param-table .head td,.param-table .off td{color:#888;}
```
